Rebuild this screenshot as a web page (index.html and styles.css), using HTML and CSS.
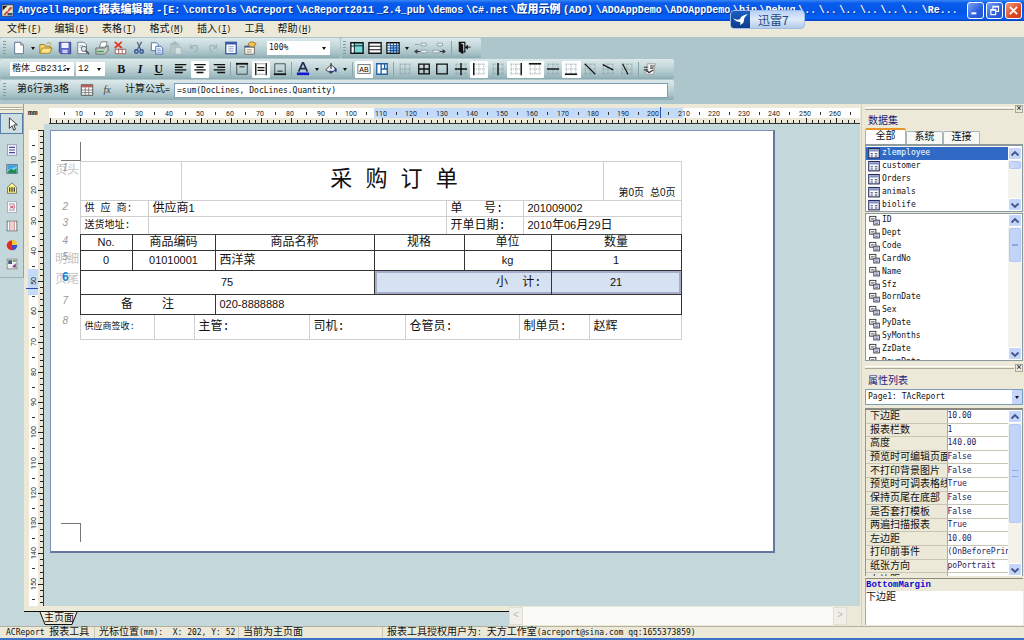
FILE: index.html
```html
<!DOCTYPE html>
<html lang="zh-CN">
<head>
<meta charset="utf-8">
<title>Anycell Report报表编辑器</title>
<link rel="stylesheet" href="styles.css">
</head>
<body>
<svg class="defs" aria-hidden="true">
  <symbol id="dots" viewBox="0 0 16 16"><path d="M2 2.500h12M2 8h12M2 13.500h12M2.500 2v12M8 2v12M13.500 2v12" fill="none" stroke="#7d8c90" stroke-width="1" stroke-dasharray="1 1.300"/></symbol>
  <symbol id="tbl" viewBox="0 0 16 16"><rect x="1" y="2" width="14" height="12.500" fill="#fff" stroke="#2b2b5a" stroke-width="1.500"/><rect x="2" y="3" width="12" height="3" fill="#7f8fc4"/><path d="M3.500 9h3M9 9h3.500M3.500 12h3M9 12h3.500" stroke="#333a66" stroke-width="1.400"/></symbol>
  <symbol id="fld" viewBox="0 0 16 16"><rect x="1" y="2" width="9" height="7" fill="#fff" stroke="#333" stroke-width="1.300"/><path d="M3 5h5M3 7h3" stroke="#555"/><rect x="7" y="7.500" width="8" height="7" fill="#e8ecff" stroke="#333" stroke-width="1.300"/><path d="M9 10h4M9 12.500h4" stroke="#3a3a8a"/></symbol>
  <symbol id="up" viewBox="0 0 10 10"><path d="M1.500 6.500 5 3l3.500 3.500" fill="none" stroke="#42588c" stroke-width="1.900"/></symbol>
  <symbol id="down" viewBox="0 0 10 10"><path d="M1.500 3.500 5 7l3.500-3.500" fill="none" stroke="#42588c" stroke-width="1.900"/></symbol>
</svg>

<header class="titlebar">
  <svg class="app-icon" viewBox="0 0 16 16"><rect x="1" y="1" width="14" height="14" fill="#e9e4dc" stroke="#40352c"/><path d="M2 2h6l-6 6z" fill="#1c1c1c"/><path d="M3 13 12 3l2 2-9 9z" fill="#c45a28"/><path d="M8 11h6v3H8z" fill="#30507a"/><path d="m5 5 4 4" stroke="#fff"/></svg>
  <h1 class="title"><span>Anycell</span><span>Report<b>报表编辑器</b></span><span>-[E:</span><span>\controls</span><span>\ACreport</span><span>\AcReport2011</span><span>_2.4_pub</span><span>\demos</span><span>\C#.net</span><span>\<b>应用示例</b></span><span>(ADO)</span><span>\ADOAppDemo</span><span>\ADOAppDemo</span><span>\bin</span><span>\Debug</span><span>\..</span><span>\..</span><span>\..</span><span>\..</span><span>\..</span><span>\..</span><span>\Re...</span></h1>
  <div class="win-buttons">
    <button aria-label="最小化"><svg viewBox="0 0 16 16"><path d="M3 11.500h6" stroke="#fff" stroke-width="2.500"/></svg></button>
    <button aria-label="还原"><svg viewBox="0 0 16 16" fill="none" stroke="#fff"><path d="M6 6V3h7v6h-3M6 3.500h7" stroke-width="1.400"/><path d="M3.500 7h6v6h-6zM3.500 7.500h6" stroke-width="1.400"/></svg></button>
    <button class="close" aria-label="关闭"><svg viewBox="0 0 16 16"><path d="m3.500 3.500 9 9m0-9-9 9" stroke="#fff" stroke-width="2"/></svg></button>
  </div>
  <div class="thunder"><svg viewBox="0 0 19 18"><path d="M2 7c3 2 5 2 7 1 1-3 4-4 8-5-2 2-4 3-4 6 0 2-1 4-4 5 0-1 1-2 0-3-2 0-5-1-7-4z" fill="#fff"/></svg><span>迅雷7</span></div>
</header>

<nav class="menubar">
  <button>文件<i>(<u>F</u>)</i></button><button>编辑<i>(<u>E</u>)</i></button><button>表格<i>(<u>T</u>)</i></button><button>格式<i>(<u>M</u>)</i></button><button>插入<i>(<u>I</u>)</i></button><button>工具</button><button>帮助<i>(<u>H</u>)</i></button>
</nav>

<section class="toolbars">
  <div class="bar-row">
    <div class="bar bar-std">
      <span class="grip"></span>
      <button class="tb" aria-label="新建"><svg viewBox="0 0 16 16"><path d="M3 1.500h7l3 3v10H3z" fill="#fff" stroke="#5a6a8a"/><path d="M10 1.500v3h3" fill="#cfd8ee" stroke="#5a6a8a"/></svg></button>
      <button class="drop" aria-label="新建选项"></button>
      <div class="group g-file">
        <button class="tb" aria-label="打开"><svg viewBox="0 0 16 16"><path d="M1 14V4h5l1 2h6v3" fill="#f5d873" stroke="#a07818"/><path d="m1 14 3-6h11l-3 6z" fill="#ffe58a" stroke="#a07818"/><path d="M9 3c2-2 4-1 5 1" fill="none" stroke="#b58a20"/></svg></button>
        <button class="tb" aria-label="保存"><svg viewBox="0 0 16 16"><path d="M1.500 1.500h13v13h-11l-2-2z" fill="#5e66c8" stroke="#33388a"/><rect x="4" y="2" width="8" height="6" fill="#eef0ff"/><rect x="5" y="10" width="6" height="4" fill="#c9ccf0"/></svg></button>
        <button class="tb" aria-label="预览"><svg viewBox="0 0 16 16"><path d="M2 1.500h7l3 3v10H2z" fill="#fff" stroke="#66738c"/><path d="M4 5h4M4 7h3" stroke="#9ab"/><circle cx="9" cy="9" r="3" fill="#d6ecf4" stroke="#555"/><path d="m11 11 4 4" stroke="#555" stroke-width="2"/></svg></button>
        <button class="tb" aria-label="打印"><svg viewBox="0 0 16 16"><path d="m5 7 2-6h7l-2 6z" fill="#fff" stroke="#777"/><path d="M1 8h10l4-3v6l-4 4H1z" fill="#c3cfc8" stroke="#5b6862"/><path d="M2 12h8" stroke="#3aa04a" stroke-width="1.500"/></svg></button>
        <button class="tb" aria-label="删除"><svg viewBox="0 0 16 16"><path d="m2 1 8 7m0-7L2 8" stroke="#e33a22" stroke-width="2"/><path d="M2.500 9.500h12v5h-12zM6.500 9v5M10.500 9v5" fill="#fff" stroke="#a05050"/></svg></button>
        <button class="tb" aria-label="剪切"><svg viewBox="0 0 16 16" fill="none"><path d="M6 1l4 9M11 1 6 10" stroke="#4b5f86" stroke-width="1.400"/><circle cx="5" cy="12" r="2" stroke="#2c4f98" stroke-width="1.500"/><circle cx="11" cy="12" r="2" stroke="#2c4f98" stroke-width="1.500"/></svg></button>
        <button class="tb" aria-label="复制"><svg viewBox="0 0 16 16"><path d="M1.500 2h6l2 2v7h-8z" fill="#fff" stroke="#4466aa"/><path d="M6.500 6h6l2 2v7h-8z" fill="#eaf1ff" stroke="#4466aa"/><path d="M8 9h4M8 11h5M8 13h5" stroke="#7d98cc"/></svg></button>
        <button class="tb" aria-label="粘贴" disabled><svg viewBox="0 0 16 16"><path d="M2 3h9v11H2zM5 1h3v3H5z" fill="#b7c6ca" stroke="#a3b5b9"/><path d="M7 7h7v8H7z" fill="#d5e0e3" stroke="#a3b5b9"/></svg></button>
        <button class="tb" aria-label="撤销" disabled><svg viewBox="0 0 16 16"><path d="M4 4v4h4M4 8c2-4 8-4 8 0 0 3-3 4-3 5" fill="none" stroke="#a0b5ba" stroke-width="1.500"/></svg></button>
        <button class="tb" aria-label="重做" disabled><svg viewBox="0 0 16 16"><path d="M12 4v4H8M12 8c-2-4-8-4-8 0 0 3 3 4 3 5" fill="none" stroke="#a0b5ba" stroke-width="1.500"/></svg></button>
        <button class="tb" aria-label="数据"><svg viewBox="0 0 16 16"><rect x="2" y="1.500" width="12" height="13" fill="#fff" stroke="#3858a8" stroke-width="1.500"/><path d="M2 3h12" stroke="#3858a8" stroke-width="2"/><path d="M5 6.500h6M5 9h6M5 11.500h6" stroke="#6f8fd0"/></svg></button>
        <button class="tb" aria-label="属性"><svg viewBox="0 0 16 16"><path d="M2 6h11v9H2z" fill="#fffbe6" stroke="#666"/><path d="M2 6.500h11" stroke="#34579a" stroke-width="2"/><path d="M4 10h6M4 12.500h6" stroke="#888"/><path d="M6 3c3-3 6-2 9 0l-3 4-5-1z" fill="#f0c050" stroke="#a07018"/></svg></button>
      </div>
      <label class="combo c-zoom"><select aria-label="缩放"><option>100%</option></select></label>
    </div>
    <div class="bar bar-cell">
      <span class="grip"></span>
      <button class="tb" aria-label="插入表格"><svg viewBox="0 0 16 16"><path d="M1 2h14v12H1z" fill="#74dcdc" stroke="#111" stroke-width="1.500"/><path d="M1 5.500h14M5 2v12" stroke="#111"/><path d="M2 3h2v2H2zM2 7h2v6H2z" fill="#fff"/></svg></button>
      <button class="tb" aria-label="插入行"><svg viewBox="0 0 16 16"><path d="M1 2h14v12H1z" fill="#fff" stroke="#111" stroke-width="1.500"/><path d="M1 6h14M1 10h14" stroke="#111" stroke-width="1.300"/></svg></button>
      <button class="tb" aria-label="表格"><svg viewBox="0 0 16 16"><path d="M1 2h14v12H1z" fill="#fff" stroke="#111" stroke-width="1.500"/><path d="M5 5h9v8H5z" fill="#79b4ee"/><path d="M1 5h14M1 8h14M1 11h14M5 2v12M8.500 2v12M12 2v12" stroke="#164a8a"/></svg></button>
      <button class="drop" aria-label="表格选项"></button>
      <button class="tb" aria-label="左移"><svg viewBox="0 0 16 16"><path d="M8 2.500h6v3H8zM8 10.500h7v3H8zM1 4h5" stroke="#8b9ea3" fill="#eef4f5"/><path d="M7 12H1m3-2-3 2 3 2" fill="none" stroke="#334" stroke-width="1.200"/></svg></button>
      <button class="tb" aria-label="右移"><svg viewBox="0 0 16 16"><path d="M6 2.500h6v3H6zM1 10.500h7v3H1z" stroke="#8b9ea3" fill="#eef4f5"/><path d="M9 12h6m-3-2 3 2-3 2" fill="none" stroke="#334" stroke-width="1.200"/></svg></button>
      <span class="sep"></span>
      <button class="tb" aria-label="退出"><svg viewBox="0 0 16 16"><path d="M2 1.500h7v11H7" fill="none" stroke="#111" stroke-width="1.300"/><path d="m2 1 5 3v11l-5-3z" fill="#111"/><path d="M15.500 7H12m0-2v4l-2.500-2z" fill="#111" stroke="#111"/></svg></button>
    </div>
  </div>

  <div class="bar-row">
    <div class="bar bar-wide bar-fmt">
      <label class="combo c-font"><select aria-label="字体"><option>楷体_GB2312</option></select></label>
      <label class="combo c-size"><select aria-label="字号"><option>12</option></select></label>
      <div class="group g-style">
        <button class="tb letter" aria-label="加粗"><b>B</b></button>
        <button class="tb letter" aria-label="斜体"><em>I</em></button>
        <button class="tb letter" aria-label="下划线"><u>U</u></button>
      </div>
      <div class="group g-three">
        <button class="tb" aria-label="左对齐"><svg viewBox="0 0 16 16"><path d="M1 3h13M1 6h9M1 9h13M1 12h9" stroke="#111" stroke-width="1.500"/></svg></button>
        <button class="tb on" aria-label="居中"><svg viewBox="0 0 16 16"><path d="M1.500 3h13M4 6h8M1.500 9h13M4 12h8" stroke="#111" stroke-width="1.500"/></svg></button>
        <button class="tb" aria-label="右对齐"><svg viewBox="0 0 16 16"><path d="M2 3h13M6 6h9M2 9h13M6 12h9" stroke="#111" stroke-width="1.500"/></svg></button>
      </div>
      <span class="sep"></span>
      <div class="group g-three">
        <button class="tb" aria-label="顶端对齐"><svg viewBox="0 0 16 16"><path d="M2 2h12v12H2z" fill="none" stroke="#444"/><path d="M1 2h14" stroke="#111" stroke-width="2"/><path d="M5 5.500h6" stroke="#111"/></svg></button>
        <button class="tb on" aria-label="垂直居中"><svg viewBox="0 0 16 16"><path d="M2 1v14M14 1v14" stroke="#111" stroke-width="1.500"/><path d="M2 2h12M2 14h12" stroke="#999"/><path d="M4 6.500h8M4 9.500h8" stroke="#111" stroke-width="1.300"/></svg></button>
        <button class="tb" aria-label="底端对齐"><svg viewBox="0 0 16 16"><path d="M2 2h12v12H2z" fill="none" stroke="#444"/><path d="M1 14h14" stroke="#111" stroke-width="2"/><path d="M5 10.500h6" stroke="#111"/></svg></button>
      </div>
      <span class="sep"></span>
      <button class="tb" aria-label="字体颜色"><svg viewBox="0 0 16 16"><path d="M3 11 7.500 1h1L13 11M5 7.500h6" fill="none" stroke="#222a55" stroke-width="1.900"/><path d="M1 13.500h14" stroke="#1616c8" stroke-width="3"/></svg></button>
      <button class="drop" aria-label="字体颜色选项"></button>
      <button class="tb" aria-label="填充颜色"><svg viewBox="0 0 16 16"><path d="m2 9 6-6 6 5-6 5z" fill="#eef0f8" stroke="#333"/><path d="M8 8V1" stroke="#333" stroke-width="1.300"/><path d="M12 6c3 1 3 4 2 6-2-1-2-3-2-6zM5 10h7l-4 3z" fill="#28408f"/></svg></button>
      <button class="drop" aria-label="填充颜色选项"></button>
      <span class="sep"></span>
      <button class="tb on" aria-label="文本"><svg viewBox="0 0 16 16"><rect x="1" y="3" width="14" height="10" fill="#fff" stroke="#666"/><text x="8" y="11.500" text-anchor="middle" class="ab">AB</text></svg></button>
      <button class="tb" aria-label="合并"><svg viewBox="0 0 16 16"><path d="M2 2h12v12H2z" fill="#fff" stroke="#1f5fa8" stroke-width="1.500"/><path d="M7 2v12M11 2v6M7 8h7" stroke="#1f5fa8" stroke-width="1.500"/></svg></button>
      <span class="sep"></span>
      <div class="group g-border">
        <button class="tb" aria-label="无边框"><svg viewBox="0 0 16 16"><use href="#dots"/></svg></button>
        <button class="tb" aria-label="所有边框"><svg viewBox="0 0 16 16"><path d="M2 2.500h12v11H2zM2 8h12M8 2.500v11" fill="none" stroke="#111" stroke-width="1.500"/></svg></button>
        <button class="tb" aria-label="外边框"><svg viewBox="0 0 16 16"><path d="M2 2.500h12v11H2z" fill="none" stroke="#111" stroke-width="1.500"/></svg></button>
        <button class="tb" aria-label="内边框"><svg viewBox="0 0 16 16"><use href="#dots"/><path d="M1 8h14M8 1v14" stroke="#111" stroke-width="1.600"/></svg></button>
        <button class="tb on" aria-label="左边框"><svg viewBox="0 0 16 16"><use href="#dots"/><path d="M2 1v14" stroke="#111" stroke-width="1.600"/></svg></button>
        <button class="tb" aria-label="内竖线"><svg viewBox="0 0 16 16"><use href="#dots"/><path d="M8 1v14" stroke="#111" stroke-width="1.600"/></svg></button>
        <button class="tb on" aria-label="右边框"><svg viewBox="0 0 16 16"><use href="#dots"/><path d="M14 1v14" stroke="#111" stroke-width="1.600"/></svg></button>
        <button class="tb on" aria-label="上边框"><svg viewBox="0 0 16 16"><use href="#dots"/><path d="M1 2h14" stroke="#111" stroke-width="1.800"/></svg></button>
        <button class="tb" aria-label="内横线"><svg viewBox="0 0 16 16"><use href="#dots"/><path d="M1 8h14" stroke="#111" stroke-width="1.600"/></svg></button>
        <button class="tb on" aria-label="下边框"><svg viewBox="0 0 16 16"><use href="#dots"/><path d="M1 14h14" stroke="#111" stroke-width="1.800"/></svg></button>
        <button class="tb" aria-label="斜线一"><svg viewBox="0 0 16 16"><use href="#dots"/><path d="m2 2 12 12" stroke="#111" stroke-width="1.300"/></svg></button>
        <button class="tb" aria-label="斜线二"><svg viewBox="0 0 16 16"><use href="#dots"/><path d="m2 3 12 6" stroke="#111" stroke-width="1.300"/></svg></button>
        <button class="tb" aria-label="斜线三"><svg viewBox="0 0 16 16"><use href="#dots"/><path d="m3 2 6 12" stroke="#111" stroke-width="1.300"/></svg></button>
      </div>
      <span class="sep"></span>
      <button class="tb" aria-label="格式检查"><svg viewBox="0 0 16 16"><path d="M5 2h9l-2 12H3z" fill="#f4f4f4" stroke="#999"/><path d="M8 4.500h5M8 7h4M1 6h5M1 9h5" stroke="#333" stroke-width="1.200"/><path d="m4 10 3 2 5-3" fill="none" stroke="#222" stroke-width="1.300"/></svg></button>
    </div>
  </div>

  <div class="bar-row">
    <div class="bar bar-wide bar-formula">
      <span class="grip"></span>
      <span class="cell-name">第6行第3格</span>
      <button class="tb" aria-label="数据表"><svg viewBox="0 0 16 16"><path d="M1.500 2h13v12h-13z" fill="#fff" stroke="#444"/><path d="M2 3.500h12" stroke="#b85c5c" stroke-width="3"/><path d="M2 8h12M2 11h12M6 5v9M10 5v9" stroke="#777"/></svg></button>
      <button class="tb fx" aria-label="函数"><em>fx</em></button>
      <label for="formula" class="formula-label">计算公式<i>=</i></label>
      <input id="formula" value="=sum(DocLines, DocLines.Quantity)">
    </div>
  </div>
</section>

<main class="work">
  <aside class="toolbox">
    <div class="toolbox-strip">
      <span class="hgrip"></span>
      <button class="pick" aria-label="选择"><svg viewBox="0 0 16 16"><path d="M5 1v12l3-3 2 5 2-1-2-5h4z" fill="#fff" stroke="#222"/></svg></button>
      <div class="tool-list">
        <button aria-label="文本框"><svg viewBox="0 0 16 16"><rect x="2" y="1" width="12" height="14" fill="#f4f4ff" stroke="#8a8ab0"/><path d="M4 4.500h8M4 8h8M4 11.500h8" stroke="#4a4a90" stroke-width="1.500"/></svg></button>
        <button aria-label="图片"><svg viewBox="0 0 16 16"><rect x="1" y="2" width="14" height="12" fill="#79d4f0" stroke="#567"/><path d="M2 13c3-6 6-6 8-3l4-3v7z" fill="#1f8a4c"/><path d="M2 3h12v2L2 9z" fill="#3fa0e0"/></svg></button>
        <button aria-label="条码"><svg viewBox="0 0 16 16"><path d="m8 1 6 6v8H2V7z" fill="#fff38a" stroke="#555"/><path d="M5 7v6M8 7v6M11 7v6" stroke="#222" stroke-width="1.500"/></svg></button>
        <button aria-label="富文本"><svg viewBox="0 0 16 16"><rect x="2" y="1" width="12" height="14" fill="#fff" stroke="#99a"/><path d="M4 4h8M4 12h8" stroke="#668"/><path d="m5 6 5 4m0-4-5 4M11 6v4" stroke="#c0304a" stroke-width="1.200"/></svg></button>
        <button aria-label="分栏"><svg viewBox="0 0 16 16"><rect x="1.500" y="1.500" width="13" height="13" fill="#fff" stroke="#555"/><path d="M5 2v12M11 2v12" stroke="#e29a9a" stroke-width="2"/><path d="M8 2v12" stroke="#ccc" stroke-width="2"/></svg></button>
        <button aria-label="图表"><svg viewBox="0 0 16 16"><circle cx="7.500" cy="8.500" r="6.500" fill="#e02c28"/><path d="M8 8V1c4 0 7 3 7 7z" fill="#f0c838"/><path d="M8 8h7c0 4-3 7-6 7z" fill="#2f52d8"/></svg></button>
        <button aria-label="对象"><svg viewBox="0 0 16 16"><rect x="1.500" y="1.500" width="13" height="13" fill="#f0f0f0" stroke="#777"/><path d="M3 3h5v5H3z" fill="#455a7c"/><path d="m8 12 5-5v6z" fill="#7a3b88"/><path d="M9 3h4v2H9z" fill="#4c8a4c"/></svg></button>
      </div>
    </div>
  </aside>

  <section class="editor">
    <div class="corner">mm</div>
    <svg class="ruler-h" id="ruler-h" aria-hidden="true"></svg>
    <svg class="ruler-v" id="ruler-v" aria-hidden="true"></svg>
    <div class="canvas">
      <div class="page">
        <span class="mark mark-top"></span>
        <table class="report">
          <colgroup><col class="w29"><col class="w52"><col class="w16"><col class="w6"><col class="w27"><col class="w13"><col class="w21"><col class="w94"><col class="w65"><col class="w31"><col class="w41"><col class="w18"><col class="w55"><col class="w4"><col class="w28"><col class="w38"><col class="w14"><col class="w78"></colgroup>
          <tr class="r39"><th><span class="band">页头</span>1</th><td colspan="4"></td><td colspan="12" class="heading">采 购 订 单</td><td class="pageno">第<i>0</i>页 总<i>0</i>页</td></tr>
          <tr class="r16"><th>2</th><td colspan="2" class="small">供 应 商:</td><td colspan="8">供应商<i>1</i></td><td colspan="3">单&nbsp;&nbsp; 号:</td><td colspan="4"><i>201009002</i></td></tr>
          <tr class="r18 last-light"><th>3</th><td colspan="2" class="small">送货地址:</td><td colspan="8"></td><td colspan="3">开单日期:</td><td colspan="4"><i>2010</i>年<i>06</i>月<i>29</i>日</td></tr>
          <tr class="r16 dark"><th>4</th><td class="mid"><i>No.</i></td><td colspan="5" class="mid">商品编码</td><td colspan="2" class="mid">商品名称</td><td colspan="3" class="mid">规格</td><td colspan="3" class="mid">单位</td><td colspan="3" class="mid">数量</td></tr>
          <tr class="r20 dark"><th><span class="band">明细</span>5</th><td class="mid"><i>0</i></td><td colspan="5" class="mid"><i>01010001</i></td><td colspan="2">西洋菜</td><td colspan="3"></td><td colspan="3" class="mid"><i>kg</i></td><td colspan="3" class="mid"><i>1</i></td></tr>
          <tr class="r24 dark"><th class="current"><span class="band">页尾</span>6</th><td colspan="8" class="mid"><i>75</i></td><td colspan="6" class="sel right">小&nbsp; 计:</td><td colspan="3" class="sel sel-end mid"><i>21</i></td></tr>
          <tr class="r20 dark"><th>7</th><td colspan="6" class="mid">备&nbsp;&nbsp; &nbsp;注</td><td colspan="11"><i>020-8888888</i></td></tr>
          <tr class="r25"><th>8</th><td colspan="3" class="tiny">供应商签收:</td><td colspan="2"></td><td colspan="2">主管:</td><td colspan="2">司机:</td><td colspan="3">仓管员:</td><td colspan="3">制单员:</td><td colspan="2">赵辉</td></tr>
        </table>
        <span class="mark mark-bottom"></span>
      </div>
    </div>
    <div class="sheetbar">
      <div class="sheets">
        <svg class="tab-edge" viewBox="0 0 8 13"><path d="M0 0h1l5 12h2V0z" fill="#ece9d8"/><path d="M1 0l5 12.500h2" fill="none" stroke="#111"/></svg><button class="sheet">主页面</button><svg class="tab-edge" viewBox="0 0 8 13"><path d="M0 0v12h1L6 0z" fill="#ece9d8"/><path d="M0 12.500h1L6 0" fill="none" stroke="#111"/></svg>
      </div>
      <div class="hscroll"><button aria-label="向左">&lt;</button><span></span><button aria-label="向右">&gt;</button></div>
    </div>
  </section>

  <aside class="side">
    <section class="panel data-panel">
      <div class="panel-top"><span></span><button aria-label="关闭数据集">×</button></div>
      <h2>数据集</h2>
      <div class="tabs"><button class="active">全部</button><button>系统</button><button>连接</button></div>
      <div class="listbox tables">
        <ul>
          <li class="selected"><svg><use href="#tbl"/></svg>zlemployee</li><li><svg><use href="#tbl"/></svg>customer</li><li><svg><use href="#tbl"/></svg>Orders</li><li><svg><use href="#tbl"/></svg>animals</li><li><svg><use href="#tbl"/></svg>biolife</li>
        </ul>
        <div class="vscroll"><button aria-label="向上"><svg><use href="#up"/></svg></button><span class="thumb t-short"></span><button aria-label="向下"><svg><use href="#down"/></svg></button></div>
      </div>
      <div class="listbox fields">
        <ul>
          <li><svg><use href="#fld"/></svg>ID</li><li><svg><use href="#fld"/></svg>Dept</li><li><svg><use href="#fld"/></svg>Code</li><li><svg><use href="#fld"/></svg>CardNo</li><li><svg><use href="#fld"/></svg>Name</li><li><svg><use href="#fld"/></svg>Sfz</li><li><svg><use href="#fld"/></svg>BornDate</li><li><svg><use href="#fld"/></svg>Sex</li><li><svg><use href="#fld"/></svg>PyDate</li><li><svg><use href="#fld"/></svg>SyMonths</li><li><svg><use href="#fld"/></svg>ZzDate</li><li><svg><use href="#fld"/></svg>DownDate</li>
        </ul>
        <div class="vscroll"><button aria-label="向上"><svg><use href="#up"/></svg></button><span class="thumb t-mid"></span><button aria-label="向下"><svg><use href="#down"/></svg></button></div>
      </div>
    </section>
    <section class="panel prop-panel">
      <div class="panel-top"><span></span><button aria-label="关闭属性列表">×</button></div>
      <h2>属性列表</h2>
      <label class="combo c-object"><select aria-label="对象"><option>Page1: TAcReport</option></select></label>
      <div class="listbox props">
        <div class="props-view">
        <table>
          <tr><th>下边距</th><td>10.00</td></tr><tr><th>报表栏数</th><td>1</td></tr><tr><th>高度</th><td>140.00</td></tr><tr><th>预览时可编辑页面</th><td>False</td></tr><tr><th>不打印背景图片</th><td>False</td></tr><tr><th>预览时可调表格线</th><td>True</td></tr><tr><th>保持页尾在底部</th><td>False</td></tr><tr><th>是否套打模板</th><td>False</td></tr><tr><th>两遍扫描报表</th><td>True</td></tr><tr><th>左边距</th><td>10.00</td></tr><tr><th>打印前事件</th><td>(OnBeforePrin</td></tr><tr><th>纸张方向</th><td>poPortrait</td></tr><tr><th>右边距</th><td></td></tr>
        </table>
        </div>
        <div class="vscroll"><button aria-label="向上"><svg><use href="#up"/></svg></button><span class="thumb t-long"></span><button aria-label="向下"><svg><use href="#down"/></svg></button></div>
      </div>
      <div class="hint"><strong>BottomMargin</strong><p>下边距</p></div>
    </section>
  </aside>
</main>

<footer class="status">
  <span class="s1"><i>ACReport </i>报表工具</span><span class="s2">光标位置<i>(mm):&nbsp; X: 202, Y: 52</i></span><span class="s3">当前为主页面</span><span class="s4">报表工具授权用户为<i>: </i>天方工作室<i>(acreport@sina.com qq:1655373859)</i></span>
</footer>
<script src="ruler.js"></script>
</body>
</html>
```

FILE: styles.css
```css
* { box-sizing: border-box; }
:root { --small: "DejaVu Sans Mono", "Noto Sans CJK SC", monospace; }
body {
  margin: 0; height: 100vh; overflow: hidden; display: flex; flex-direction: column;
  background: #ece9d8; color: #111;
  font: 10px/12px "Liberation Mono", "Noto Sans CJK SC", monospace;
}
button, input, select { font: inherit; color: inherit; margin: 0; padding: 0; border: 0; background: none; border-radius: 0; }
button { display: flex; align-items: center; justify-content: center; }
i { font-style: normal; font-size: 8px; font-family: var(--small); }
.defs { position: absolute; width: 0; height: 0; }

/* title bar */
.titlebar {
  position: relative; flex: none; height: 21px; display: flex; align-items: center; padding: 0 2px 0 1px;
  background: linear-gradient(#3a86f4 0, #0a5cec 3px, #0355e6 12px, #0463fa 18px, #0341c0 21px);
}
.app-icon { width: 13px; height: 13px; margin-right: 4px; }
.title {
  flex: 1; margin: 0 9px 0 0; display: flex; justify-content: space-between; white-space: nowrap;
  color: #fff; font-size: 10px; line-height: 18px; font-weight: bold; text-shadow: 1px 1px 0 #0b2f8a;
}
.title b { font-size: 11px; line-height: 16px; }
.win-buttons { display: flex; gap: 2px; }
.win-buttons button { width: 17px; height: 17px; border: 1px solid #fff; border-radius: 3px; background: linear-gradient(135deg, #7ba4f5, #2a5de0 60%, #2456d0); }
.win-buttons .close { background: linear-gradient(135deg, #f09a80, #dd4a25 60%, #c83c1a); }
.win-buttons svg { width: 13px; height: 13px; }
.thunder {
  position: absolute; z-index: 2; left: 730px; top: 10px; height: 19px; width: 75px; display: flex;
  border-radius: 4px; overflow: hidden; background: linear-gradient(#b8d2f6, #dfeafa 50%, #b4cbe9); border: 1px solid #9fbce6;
}
.thunder svg { width: 19px; height: 18px; background: linear-gradient(#1b5fc0, #0c3b88); }
.thunder span { flex: 1; padding-left: 8px; font: 12px/17px "Noto Sans CJK SC", sans-serif; color: #24477e; }

/* menu */
.menubar { flex: none; height: 16px; display: flex; align-items: flex-end; gap: 13px; padding-left: 7px; }
.menubar button { align-items: baseline; line-height: 14px; }

/* toolbars */
.toolbars { flex: none; height: 67px; padding-top: 1px; background: #adc6cb; display: flex; flex-direction: column; gap: 1px; }
.bar-row { display: flex; gap: 1px; }
.bar { height: 20px; display: flex; align-items: center; background: linear-gradient(#dce9eb, #c4d7da 40%, #a3bfc4 80%, #8cabb1); border-radius: 2px; }
.bar-std { width: 340px; }
.bar-cell { width: 140px; }
.bar-wide { width: 674px; }
.grip { flex: none; width: 3px; height: 14px; margin: 0 3px; background: repeating-linear-gradient(#7f9ea4 0 1px, transparent 1px 3px); }
.tb { flex: none; width: 18px; height: 17px; }
.tb svg { width: 14px; height: 14px; }
.tb.on { background: #fdfefe; border-radius: 1px; }
.drop { width: 9px; height: 17px; }
.drop::after, .combo::after { content: ""; border: 2px solid transparent; border-top: 3px solid #111; border-bottom: 0; }
.sep { flex: none; width: 1px; height: 14px; margin: 0 2px; background: #87a4aa; }
.group { display: flex; }
.group .tb { flex: 1; }
.bar-std .grip { margin-right: 4px; }
.g-file { width: 222px; }
.combo { position: relative; flex: none; display: flex; align-items: center; background: #fff; height: 14px; }
.combo select { appearance: none; width: 100%; height: 100%; padding: 0 10px 0 2px; outline: 0; }
.combo::after { position: absolute; right: 4px; pointer-events: none; }
.c-zoom { width: 63px; margin-left: 8px; font-size: 8px; font-family: var(--small); }
.bar-cell .drop { width: 10px; }
.bar-cell .sep { margin: 0 3px; }
.bar-cell .grip { margin: 0 2px; }
.c-font { width: 64px; margin-left: 10px; font-size: 9px; }
.c-font select { padding-right: 8px; }
.c-size { width: 29px; margin-left: 2px; font-size: 9px; }
.g-style { width: 56px; margin: 0 4px 0 7px; }
.g-three { width: 56px; }
.letter { font: bold 12px/15px "Liberation Serif", serif; }
.ab { font: 8px "Liberation Sans", sans-serif; }
.bar-fmt > .tb + .drop { width: 10px; }
.g-border { width: 240px; }
.bar-formula .cell-name { width: 62px; padding-left: 8px; white-space: nowrap; }
.bar-formula .tb { width: 20px; }
.bar-formula .tb:nth-of-type(1) { margin-left: 6px; }
.fx em { font: italic 10px/12px "Liberation Serif", serif; color: #444; }
.formula-label { margin-left: 8px; width: 49px; white-space: nowrap; }
.bar-formula input { flex: 1; height: 15px; margin-right: 6px; padding: 0 2px; background: #fff; border: 1px solid #7f9db9; font-size: 8px; font-family: var(--small); }

/* work area */
.work { flex: 1; min-height: 0; display: flex; }
.toolbox { flex: none; width: 24px; background: #c4d7db; }
.toolbox-strip { height: 174px; display: flex; flex-direction: column; border-right: 1px solid #8ca5aa; border-bottom: 1px solid #9fb4b8; }
.hgrip { height: 9px; background: linear-gradient(#ece9d8 0 3px, #b5ab94 3px 4px, #fff 4px 5px, #b5ab94 5px 6px, #ece9d8 6px); }
.pick { height: 21px; border: 1px solid #587fa8; background: #cddde2; }
.toolbox svg { width: 14px; height: 14px; }
.tool-list { flex: 1; display: flex; flex-direction: column; padding: 6px 0 3px; }
.tool-list button { flex: 1; }
.tool-list svg { width: 12px; height: 12px; }

.editor { flex: 1; min-width: 0; display: grid; grid-template-columns: 20px minmax(0, 1fr); grid-template-rows: 20px minmax(0, 1fr) 20px; padding-right: 1px; }
.corner { padding: 3px 0 0 4px; font: bold 8px/12px "Liberation Mono", monospace; }
.ruler-h, .ruler-v { width: 100%; height: 100%; overflow: hidden; font: 7px Roboto, sans-serif; }
.canvas { background: #c4d7db; padding: 6px; overflow: hidden; }
.page { position: relative; z-index: 0; width: 725px; height: 423px; background: #fff; border: 1px solid #7c90b8; border-right: 2px solid #66779f; border-bottom: 2px solid #66779f; display: flex; flex-direction: column; }
.mark { display: block; width: 20px; height: 19px; margin-left: 10px; border-right: 1px solid #777; flex: none; }
.mark-top { margin-top: 11px; border-bottom: 1px solid #777; }
.mark-bottom { margin-top: auto; margin-bottom: 9px; border-top: 1px solid #777; }

.report { width: 630px; table-layout: fixed; border-collapse: collapse; font-size: 12px; line-height: 14px; }
.report td { border: 1px solid #cfcfcf; padding: 0 0 0 4px; white-space: nowrap; overflow: hidden; }
.report i { font: 11px/14px "Liberation Sans", sans-serif; }
.report th { position: relative; padding: 0; border: 0; font: italic 10px/12px "Liberation Sans", sans-serif; color: #999; vertical-align: top; }
.report th.current { color: #1484dc; font-weight: bold; font-style: normal; font-size: 12px; }
.band { position: absolute; left: 4px; top: 0; z-index: -1; font: normal 12px/13px "Noto Sans CJK SC", sans-serif; color: #c4c4c4; white-space: nowrap; }
.report .last-light td { border-bottom-color: #444; }
.report .dark td { border-color: #333; }
.report .mid { text-align: center; padding: 0; }
.report .right { text-align: right; padding-right: 9px; }
.report .small { font-size: 10px; }
.report .tiny { font-size: 9px; }
.report .heading { text-align: center; font-size: 22px; line-height: 30px; }
.report .pageno { font-size: 10px; line-height: 12px; vertical-align: bottom; text-align: right; padding: 0 5px 0 0; }
.report .pageno i { font-size: 10px; line-height: 12px; }
.report .sel { background: #d6e1f1; box-shadow: inset 0 2px #a7aecb, inset 0 -2px #a7aecb; }
.report .sel.right { box-shadow: inset 2px 0 #a7aecb, inset 0 2px #a7aecb, inset 0 -2px #a7aecb; }
.report .sel-end { box-shadow: inset -2px 0 #a7aecb, inset 0 2px #a7aecb, inset 0 -2px #a7aecb; }
.r39 { height: 39px; } .r16 { height: 16px; } .r18 { height: 18px; } .r20 { height: 20px; } .r24 { height: 24px; } .r25 { height: 25px; }
.w29 { width: 29px; } .w52 { width: 52px; } .w16 { width: 16px; } .w6 { width: 6px; } .w27 { width: 27px; } .w13 { width: 13px; }
.w21 { width: 21px; } .w94 { width: 94px; } .w65 { width: 65px; } .w31 { width: 31px; } .w41 { width: 41px; } .w18 { width: 18px; }
.w55 { width: 55px; } .w4 { width: 4px; } .w28 { width: 28px; } .w38 { width: 38px; } .w14 { width: 14px; } .w78 { width: 78px; }

.sheetbar { grid-column: 1 / -1; display: flex; align-items: flex-start; padding-top: 1px; }
.sheets { flex: 1; display: flex; align-items: flex-start; margin-top: 4px; height: 15px; padding-left: 15px; border-top: 1px solid #111; background: #c4d7db; }
.tab-edge { width: 8px; height: 13px; }
.sheet { width: 24px; height: 13px; background: #ece9d8; border-bottom: 1px solid #111; line-height: 11px; white-space: nowrap; }
.tab-edge + .sheet { position: relative; }
.hscroll { width: 338px; height: 18px; margin-right: 13px; display: flex; background: #fafaf6; }
.hscroll button { width: 14px; background: #f1f0e8; border: 1px solid #e0ded2; color: #bbb; }
.hscroll span { flex: 1; }

/* right side */
.side { flex: none; width: 163px; padding: 0 1px 0 3px; border-left: 1px solid #d5d1bf; display: flex; flex-direction: column; }
.panel { display: flex; flex-direction: column; }
.data-panel { height: 259px; }
.prop-panel { flex: 1; min-height: 0; }
.panel-top { height: 9px; flex: none; display: flex; align-items: center; gap: 1px; }
.panel-top span { flex: 1; height: 3px; border-top: 1px solid #fff; border-bottom: 1px solid #aca899; }
.panel-top button { width: 8px; height: 8px; border: 1px solid #aca899; font-size: 9px; line-height: 6px; }
.panel h2 { margin: 2px 0 0 3px; font-size: 10px; line-height: 13px; font-weight: normal; color: #1a1a78; }
.tabs { display: flex; height: 17px; align-items: flex-end; flex: none; border-bottom: 1px solid #919b9c; }
.tabs button { width: 37px; height: 13px; background: #f8f8f4; border: 1px solid #a9b5b8; border-bottom: 0; border-radius: 2px 2px 0 0; }
.tabs .active { width: 41px; height: 16px; border-top: 2px solid #e8962c; background: #fff; }
.listbox { display: flex; background: #fff; border: 1px solid #8a9a9c; overflow: hidden; font-size: 8px; font-family: var(--small); }
.listbox ul { flex: 1; margin: 0; padding: 0; list-style: none; display: grid; grid-auto-rows: 1fr; }
.listbox li { display: flex; align-items: center; gap: 2px; padding-left: 2px; }
.listbox li svg { width: 12px; height: 12px; }
.tables { height: 67px; flex: none; padding-top: 1px; }
.tables .selected { background: #316ac5; color: #fff; }
.fields { height: 148px; margin-top: 1px; flex: none; }
.fields ul { height: 154px; }
.fields li { padding-left: 3px; }
.fields li svg { width: 11px; height: 11px; }
.vscroll { flex: none; width: 14px; display: flex; flex-direction: column; background: #f3f3ec; }
.vscroll button { flex: none; height: 13px; background: #c6d6fb; border: 1px solid #fff; border-radius: 2px; }
.vscroll button svg { width: 10px; height: 10px; }
.vscroll button:last-child { margin-top: auto; }
.thumb { margin: 1px; border: 1px solid #b4c7f5; border-radius: 2px; background: linear-gradient(90deg, #cfdcfc, #bdd0fb); }
.t-short { height: 8px; }
.t-mid { height: 34px; }
.t-long { height: 99px; }
.t-mid, .t-long { background: linear-gradient(#8fa8e6, #8fa8e6) center 47% / 6px 1px no-repeat, linear-gradient(#8fa8e6, #8fa8e6) center 53% / 6px 1px no-repeat, #c3d4fb; }
.prop-panel h2 { margin-top: 3px; line-height: 13px; margin-bottom: 1px; }
.c-object { width: 100%; height: 16px; border: 1px solid #7f9db9; font-size: 8px; font-family: var(--small); }
.c-object::after { right: 3px; z-index: 1; }
.c-object select { background: linear-gradient(#c6d6fb, #c6d6fb) right / 10px 100% no-repeat; }
.props { height: 168px; margin-top: 3px; flex: none; border-top: 2px solid #8a8a80; border-bottom: 0; }
.props-view { flex: 1; height: 166px; overflow: hidden; }
.props table { width: 100%; height: 177px; table-layout: fixed; border-collapse: collapse; }
.props th { width: 81px; padding: 0 0 0 4px; background: #ece9d8; font-size: 10px; font-weight: normal; text-align: left; }
.props th, .props td { line-height: 12px; white-space: nowrap; overflow: hidden; border-bottom: 1px solid #c9c5b4; }
.props td { padding: 0; font-size: 8px; color: #1a1a5e; border-left: 1px solid #aca899; }
.hint { flex: 1; min-height: 0; margin: 2px 0 1px; border-top: 1px solid #8a8a80; border-left: 1px solid #aca899; background: #fff; }
.hint strong { display: block; background: #ece9d8; color: #0a0ad0; font-size: 9px; line-height: 12px; }
.hint p { margin: 0; line-height: 13px; }

/* status bar */
.status { flex: none; height: 14px; display: flex; align-items: center; white-space: nowrap; border-top: 1px solid #b5b1a0; border-bottom: 2px solid #3a72c8; line-height: 11px; }
.status span { padding-left: 4px; border-left: 1px solid #cbc7b5; }
.status .s1 { width: 94px; padding-left: 6px; border: 0; }
.status .s2 { width: 144px; }
.status .s3 { width: 144px; }
.status .s4 { flex: 1; }
```

FILE: ruler.js
```js
// Draws both millimetre rulers; the selected range and the pointer position are highlighted.
const MM = 3.024;
const NS = "http://www.w3.org/2000/svg";

function add(svg, tag, attrs, text) {
  const el = document.createElementNS(NS, tag);
  for (const key in attrs) el.setAttribute(key, attrs[key]);
  if (text !== undefined) el.textContent = text;
  svg.appendChild(el);
}

function horizontal() {
  const svg = document.getElementById("ruler-h");
  const zero = 5.5;
  add(svg, "rect", { x: 5, y: 4, width: "100%", height: 10, fill: "#fff" });
  add(svg, "rect", { x: 330, y: 4, width: 309, height: 10, fill: "#c3dbf8" });
  add(svg, "rect", { x: 616, y: 3, width: 1, height: 11, fill: "#2a4fa8" });
  for (let mm = 0; mm <= 266; mm += 2) {
    const x = Math.round(zero + mm * MM);
    const long = mm % 10 === 0;
    add(svg, "rect", { x, y: long ? 14 : 16, width: 1, height: long ? 6 : 4, fill: "#222" });
  }
  for (let mm = 5; mm <= 265; mm += 5) {
    const x = Math.round(zero + mm * MM);
    if (mm % 10) add(svg, "rect", { x: x - 1, y: 8, width: 1, height: 3, fill: "#333" });
    else add(svg, "text", { x: x - 1, y: 12, "text-anchor": "middle", fill: "#222" }, mm);
  }
  add(svg, "rect", { x: 5, y: 19, width: "100%", height: 1, fill: "#333" });
}

function vertical() {
  const svg = document.getElementById("ruler-v");
  const zero = 6;
  add(svg, "rect", { x: 5, y: zero, width: 9, height: "100%", fill: "#fff" });
  add(svg, "rect", { x: 4, y: 145, width: 10, height: 26, fill: "#c3dbf8" });
  add(svg, "rect", { x: 2, y: 164, width: 12, height: 1, fill: "#2a4fa8" });
  for (let mm = 0; mm <= 156; mm += 2) {
    const y = Math.round(zero + mm * MM);
    const long = mm % 10 === 0;
    add(svg, "rect", { x: long ? 14 : 16, y, width: long ? 6 : 4, height: 1, fill: "#222" });
  }
  for (let mm = 5; mm <= 155; mm += 5) {
    const y = Math.round(zero + mm * MM);
    if (mm % 10) add(svg, "rect", { x: 8, y, width: 3, height: 1, fill: "#333" });
    else add(svg, "text", { x: 12, y, "text-anchor": "middle", fill: "#222", transform: `rotate(-90 12 ${y})` }, mm);
  }
  add(svg, "rect", { x: 19, y: zero, width: 1, height: "100%", fill: "#333" });
}

horizontal();
vertical();
```
